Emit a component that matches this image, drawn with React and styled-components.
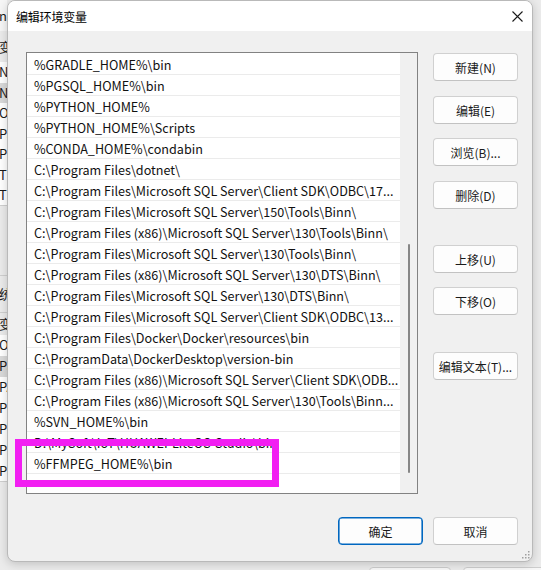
import React from "react";
import styled, { createGlobalStyle } from "styled-components";

const UI_FONT = `"Microsoft YaHei UI", "Noto Sans CJK SC", "Noto Sans", sans-serif`;

const GlobalStyle = createGlobalStyle`
  html, body { margin: 0; padding: 0; }
  body {
    width: 541px;
    height: 570px;
    overflow: hidden;
    background: #e9e9e9;
    font-family: ${UI_FONT};
    -webkit-font-smoothing: antialiased;
  }
  * { box-sizing: border-box; }
`;

/* ---------- desktop & the window behind ---------- */

const Desktop = styled.div`
  position: relative;
  width: 541px;
  height: 570px;
  overflow: hidden;
  background: #e9e9e9;
`;

const BackWindow = styled.div`
  position: absolute;
  inset: 0;
  display: flex;
  flex-direction: column;
  background: #ebebeb;
  font-family: ${UI_FONT};
  font-size: 13px;
  color: #1a1a1a;
`;

const BackUpper = styled.div`
  flex: 1;
  display: flex;
`;

const BackColumn = styled.div`
  width: 7px;
  overflow: hidden;
  display: flex;
  flex-direction: column;
`;

const BackRow = styled.div`
  height: ${(p) => p.$h}px;
  flex-shrink: 0;
  display: flex;
  align-items: center;
  white-space: nowrap;
  margin-left: -1px;
  line-height: 16px;
  background: ${(p) => p.$bg || "transparent"};
  border-bottom: ${(p) => (p.$line ? "1px solid #cfcfcf" : "none")};
`;

const BackFooter = styled.div`
  height: 8px;
  display: flex;
  gap: 12px;
  padding: 5px 0 0 369px;
`;

const BackButton = styled.div`
  width: 82px;
  height: 24px;
  flex-shrink: 0;
  border: 1px solid #cdcdcd;
  border-radius: 4px;
  background: #f7f7f7;
`;

/* ---------- dialog ---------- */

const Dialog = styled.div`
  position: absolute;
  left: 7px;
  top: 0;
  width: 526px;
  height: 562px;
  display: flex;
  flex-direction: column;
  background: #f0f0f0;
  border: 1px solid #b9b9b9;
  border-radius: 8px;
  box-shadow: 0 2px 10px rgba(0, 0, 0, 0.18);
  font-family: ${UI_FONT};
  color: #1b1b1b;
`;

const TitleBar = styled.div`
  height: 30px;
  flex-shrink: 0;
  display: flex;
  align-items: center;
  justify-content: space-between;
  padding: 0 9px 0 8px;
  background: #ffffff;
  border-radius: 7px 7px 0 0;
`;

const Title = styled.span`
  font-size: 12px;
  color: #000;
  letter-spacing: -0.2px;
`;

const CloseIcon = styled.svg`
  width: 11px;
  height: 11px;
  display: block;
`;

const Body = styled.div`
  flex: 1;
  display: flex;
  flex-direction: column;
  padding: 21px 14px 0 18px;
`;

const Main = styled.div`
  display: flex;
  gap: 15px;
  align-items: flex-start;
`;

const ListBox = styled.div`
  width: 392px;
  height: 442px;
  display: flex;
  background: #ffffff;
  border: 1px solid #828282;
`;

const Rows = styled.div`
  flex: 1;
  min-width: 0;
  padding-top: 1px;
  display: flex;
  flex-direction: column;
  overflow: hidden;
`;

const Row = styled.div`
  height: 21px;
  flex-shrink: 0;
  padding: 1px 0 0 7px;
  line-height: 19px;
  font-size: 12.6px;
  white-space: nowrap;
  overflow: hidden;
  color: #111;
  border-bottom: ${(p) => (p.$last ? "none" : "1px solid #ebebeb")};
`;

const ScrollTrack = styled.div`
  width: 17px;
  flex-shrink: 0;
  background: #f0f0f0;
  display: flex;
  flex-direction: column;
  padding-left: 8px;
  padding-top: ${(p) => p.$offset}px;
`;

const Thumb = styled.div`
  width: 2px;
  height: ${(p) => p.$size}px;
  border-radius: 1px;
  background: #868686;
`;

const SideButtons = styled.div`
  display: flex;
  flex-direction: column;
  padding-top: 1px;
`;

const Button = styled.button`
  width: 85px;
  height: 28px;
  margin-top: ${(p) => p.$space || 0}px;
  padding: 0;
  display: flex;
  align-items: center;
  justify-content: center;
  font-family: ${UI_FONT};
  font-size: 12px;
  color: #1a1a1a;
  background: #fdfdfd;
  border: 1px solid ${(p) => (p.$primary ? "#0067c0" : "#d0d0d0")};
  border-bottom-color: ${(p) => (p.$primary ? "#0067c0" : "#c2c2c2")};
  box-shadow: ${(p) => (p.$primary ? "inset 0 0 0 0.6px #0067c0" : "none")};
  border-radius: 4px;
  cursor: default;
`;

const Footer = styled.div`
  display: flex;
  justify-content: flex-end;
  gap: 10px;
  margin-top: 23px;
`;

const Grip = styled.svg`
  position: absolute;
  right: 2px;
  bottom: 2px;
  width: 8px;
  height: 8px;
`;

/* annotation frame drawn over the dialog */
const Marker = styled.div`
  position: absolute;
  left: 15px;
  top: 439px;
  width: 264px;
  height: 48px;
  border: 7px solid #f21ef2;
`;

const paths = [
  "%GRADLE_HOME%\\bin",
  "%PGSQL_HOME%\\bin",
  "%PYTHON_HOME%",
  "%PYTHON_HOME%\\Scripts",
  "%CONDA_HOME%\\condabin",
  "C:\\Program Files\\dotnet\\",
  "C:\\Program Files\\Microsoft SQL Server\\Client SDK\\ODBC\\17...",
  "C:\\Program Files\\Microsoft SQL Server\\150\\Tools\\Binn\\",
  "C:\\Program Files (x86)\\Microsoft SQL Server\\130\\Tools\\Binn\\",
  "C:\\Program Files\\Microsoft SQL Server\\130\\Tools\\Binn\\",
  "C:\\Program Files (x86)\\Microsoft SQL Server\\130\\DTS\\Binn\\",
  "C:\\Program Files\\Microsoft SQL Server\\130\\DTS\\Binn\\",
  "C:\\Program Files\\Microsoft SQL Server\\Client SDK\\ODBC\\13...",
  "C:\\Program Files\\Docker\\Docker\\resources\\bin",
  "C:\\ProgramData\\DockerDesktop\\version-bin",
  "C:\\Program Files (x86)\\Microsoft SQL Server\\Client SDK\\ODB...",
  "C:\\Program Files (x86)\\Microsoft SQL Server\\130\\Tools\\Binn...",
  "%SVN_HOME%\\bin",
  "D:\\MySoft\\IoT\\HUAWEI-LiteOS-Studio\\bin",
  "%FFMPEG_HOME%\\bin",
  "",
];

const backRows = [
  { h: 31, t: "nx", bg: "#f6f6f6" },
  { h: 31, t: "变量" },
  { h: 20.5, t: "NVM_HOME", bg: "#fff" },
  { h: 20.5, t: "NVM_SYMLINK", bg: "#d9d9d9" },
  { h: 20.5, t: "OneDrive", bg: "#fff" },
  { h: 20.5, t: "Path", bg: "#fff" },
  { h: 20.5, t: "PyCharm", bg: "#fff" },
  { h: 20.5, t: "TEMP", bg: "#fff" },
  { h: 20.5, t: "TMP", bg: "#fff", line: true },
  { h: 70, t: "", line: true },
  { h: 37, t: "统变量", line: true },
  { h: 22, t: "变量" },
  { h: 21, t: "OS", bg: "#fff" },
  { h: 21, t: "Path", bg: "#d9d9d9" },
  { h: 21, t: "PATHEXT", bg: "#fff" },
  { h: 21, t: "POSTGRES", bg: "#fff" },
  { h: 21, t: "PROCESSOR", bg: "#fff" },
  { h: 21, t: "PROCESSOR", bg: "#fff" },
  { h: 21, t: "PROCESSOR", bg: "#fff", line: true },
];

export default function App() {
  const sideButtons = [
    { label: "新建(N)", space: 0 },
    { label: "编辑(E)", space: 15 },
    { label: "浏览(B)...", space: 14 },
    { label: "删除(D)", space: 15 },
    { label: "上移(U)", space: 36 },
    { label: "下移(O)", space: 14 },
    { label: "编辑文本(T)...", space: 37 },
  ];

  return (
    <>
      <GlobalStyle />
      <Desktop>
        <BackWindow>
          <BackUpper>
            <BackColumn>
              {backRows.map((r, i) => (
                <BackRow key={i} $h={r.h} $bg={r.bg} $line={r.line}>
                  {r.t}
                </BackRow>
              ))}
            </BackColumn>
          </BackUpper>
          <BackFooter>
            <BackButton />
            <BackButton />
          </BackFooter>
        </BackWindow>

        <Dialog>
          <TitleBar>
            <Title>编辑环境变量</Title>
            <CloseIcon viewBox="0 0 11 11">
              <path d="M0.5 0.5 L10.5 10.5 M10.5 0.5 L0.5 10.5" stroke="#1a1a1a" strokeWidth="1.1" fill="none" />
            </CloseIcon>
          </TitleBar>
          <Body>
            <Main>
              <ListBox>
                <Rows>
                  {paths.map((p, i) => (
                    <Row key={i} $last={i === paths.length - 1}>
                      {p}
                    </Row>
                  ))}
                </Rows>
                <ScrollTrack $offset={191}>
                  <Thumb $size={229} />
                </ScrollTrack>
              </ListBox>
              <SideButtons>
                {sideButtons.map((b) => (
                  <Button key={b.label} $space={b.space}>
                    {b.label}
                  </Button>
                ))}
              </SideButtons>
            </Main>
            <Footer>
              <Button $primary>确定</Button>
              <Button>取消</Button>
            </Footer>
          </Body>
          <Grip viewBox="0 0 8 8">
            <g fill="#a0a0a0">
              <rect x="6" y="0" width="1.5" height="1.5" />
              <rect x="3" y="3" width="1.5" height="1.5" />
              <rect x="6" y="3" width="1.5" height="1.5" />
              <rect x="0" y="6" width="1.5" height="1.5" />
              <rect x="3" y="6" width="1.5" height="1.5" />
              <rect x="6" y="6" width="1.5" height="1.5" />
            </g>
          </Grip>
        </Dialog>

        <Marker />
      </Desktop>
    </>
  );
}
